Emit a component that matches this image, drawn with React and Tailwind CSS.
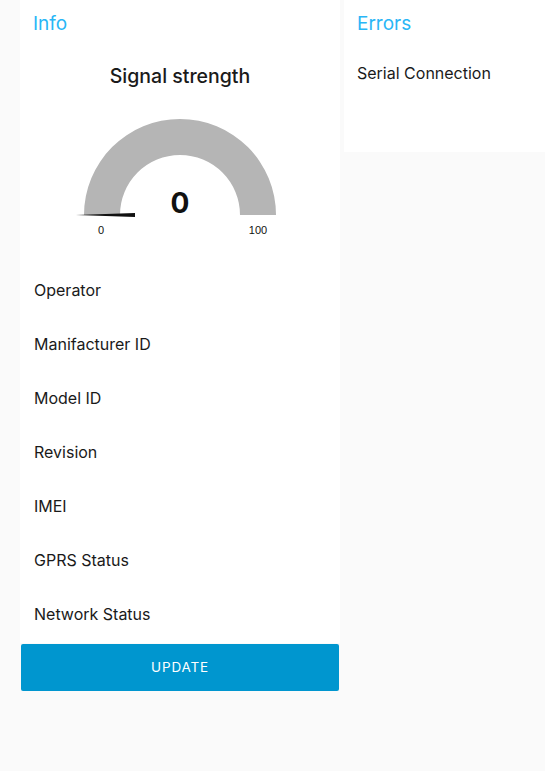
export default function App() {
  const rows = ["Operator", "Manifacturer ID", "Model ID", "Revision", "IMEI", "GPRS Status", "Network Status"];
  return (
    <div className="min-h-screen bg-[#fafafa] flex items-start pl-5 text-[#1a1a1a]" style={{ fontFamily: "Inter, 'Noto Sans', sans-serif" }}>
      {/* Info column */}
      <div className="w-[320px] flex flex-col">
        <div className="bg-white px-[13px] pt-[12px] pb-[18px]">
          <h2 className="text-[19px] leading-[24px] text-[#29b6f6]">Info</h2>

          {/* Gauge */}
          <p className="mt-[27px] text-center text-[19.5px] leading-[26px] font-medium">Signal strength</p>
          <div className="relative h-[150px] -mx-[13px] mt-[6px]">
            <svg width="320" height="150" viewBox="0 0 320 150" className="absolute left-0 top-0">
              <path d="M64 120 A96 96 0 0 1 256 120 L220 120 A60 60 0 0 0 100 120 Z" fill="#b5b5b5" />
              <polygon points="56,120 115,118 115,122" fill="#111" />
            </svg>
            <span className="absolute left-[145px] top-[88px] w-[30px] text-center text-[28px] leading-[40px] font-bold text-[#111]">0</span>
            <span className="absolute left-[76px] top-[127px] w-[10px] text-center text-[11px] text-[#111]" style={{ fontFamily: "'Liberation Sans', sans-serif" }}>0</span>
            <span className="absolute left-[228px] top-[127px] w-[20px] text-center text-[11px] text-[#111]" style={{ fontFamily: "'Liberation Sans', sans-serif" }}>100</span>
          </div>

          {/* Rows */}
          <div className="flex flex-col gap-[32px] pt-[34px] pl-px">
            {rows.map((r) => (
              <p key={r} className="text-[16px] leading-[22px]">{r}</p>
            ))}
          </div>
        </div>
        <button className="mx-px mt-px h-[47px] rounded-[2px] bg-[#0096cf] text-white text-[13.5px] tracking-[0.06em]">
          UPDATE
        </button>
      </div>

      {/* Errors column */}
      <div className="ml-1 flex-1 bg-white h-[152px] px-[13px] pt-[12px]">
        <h2 className="text-[19px] leading-[24px] text-[#29b6f6]">Errors</h2>
        <p className="mt-[26px] text-[16px] leading-[22px]">Serial Connection</p>
      </div>
    </div>
  );
}
